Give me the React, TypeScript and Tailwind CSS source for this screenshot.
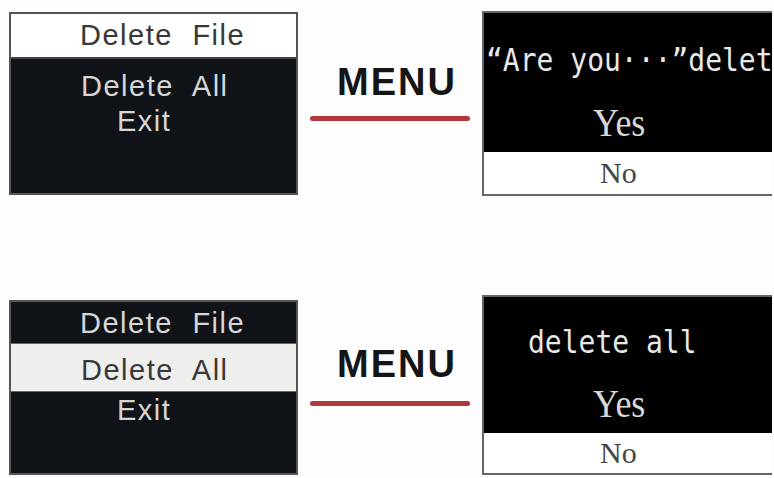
import React from "react";

const sans = { fontFamily: '"Liberation Sans", Arial, sans-serif' };
const serif = { fontFamily: '"Liberation Serif", "Times New Roman", serif' };
const mono = { fontFamily: '"DejaVu Sans Mono", "Liberation Mono", monospace' };

function MenuLabel({ top, gap }: { top: "a" | "b"; gap: "a" | "b" }) {
  return (
    <div className="ml-[12px] w-[160px] flex flex-col">
      <div
        className={
          (top === "a" ? "mt-[63px]" : "mt-[65px]") +
          " pl-[27px] text-[38px] leading-[38px] font-bold text-[#151515] tracking-[2px]"
        }
        style={sans}
      >
        MENU
      </div>
      <div
        className={
          (gap === "a" ? "mt-[15px]" : "mt-[18px]") +
          " h-[5px] w-[160px] bg-[#b3363a] rounded-full"
        }
      />
    </div>
  );
}

export default function App() {
  return (
    <div className="w-[774px] h-[478px] bg-[#fdfdfd] overflow-hidden flex flex-col" style={sans}>
      {/* Row 1 */}
      <div className="h-[280px] flex items-start">
        {/* Left menu box */}
        <div className="ml-[9px] mt-[12px] w-[289px] h-[183px] border-2 border-[#555] bg-[#101317] flex flex-col text-[29px] tracking-[1.5px] [word-spacing:10px]">
          <div className="h-[45px] bg-white border-b-2 border-[#444] text-[#383838] pl-[69px] flex items-center">
            Delete File
          </div>
          <div className="mt-[10px] h-[35px] text-[#d6d6d6] pl-[70px] flex items-center">
            Delete All
          </div>
          <div className="h-[35px] text-[#d6d6d6] pl-[106px] flex items-center">Exit</div>
        </div>

        <MenuLabel top="a" gap="a" />

        {/* Right dialog box */}
        <div className="ml-[12px] mt-[11px] w-[290px] h-[185px] border-2 border-[#666] border-r-0 bg-white overflow-hidden flex flex-col">
          <div className="h-[139px] bg-black flex flex-col">
            <div
              className="mt-[30px] h-[40px] leading-[40px] pl-[2px] text-[28px] text-[#e8e8e8] whitespace-nowrap origin-bottom scale-y-[1.12]"
              style={mono}
            >
              “Are you···”delete
            </div>
            <div
              className="mt-[20px] h-[40px] leading-[40px] pl-[109px] text-[36px] text-[#d8d8d8] origin-center scale-y-[1.12]"
              style={serif}
            >
              Yes
            </div>
          </div>
          <div
            className="h-[42px] leading-[42px] pl-[116px] text-[30px] text-[#444]"
            style={serif}
          >
            No
          </div>
        </div>
      </div>

      {/* Row 2 */}
      <div className="h-[198px] flex items-start">
        <div className="ml-[9px] mt-[20px] w-[289px] h-[175px] border-2 border-[#555] bg-[#101317] flex flex-col text-[29px] tracking-[1.5px] [word-spacing:10px]">
          <div className="h-[41px] pt-[3px] text-[#d6d6d6] pl-[69px] flex items-center">
            Delete File
          </div>
          <div className="h-[49px] pt-[7px] bg-[#eeeeec] border-y border-[#666] text-[#383838] pl-[70px] flex items-center">
            Delete All
          </div>
          <div className="h-[36px] pt-[2px] text-[#d6d6d6] pl-[106px] flex items-center">Exit</div>
        </div>

        <MenuLabel top="b" gap="b" />

        <div className="ml-[12px] mt-[15px] w-[290px] h-[180px] border-2 border-[#666] border-r-0 bg-white overflow-hidden flex flex-col">
          <div className="h-[136px] bg-black flex flex-col">
            <div
              className="mt-[28px] h-[40px] leading-[40px] pl-[44px] text-[28px] text-[#e8e8e8] whitespace-nowrap origin-bottom scale-y-[1.12]"
              style={mono}
            >
              delete all
            </div>
            <div
              className="mt-[19px] h-[40px] leading-[40px] pl-[109px] text-[36px] text-[#d8d8d8] origin-center scale-y-[1.12]"
              style={serif}
            >
              Yes
            </div>
          </div>
          <div
            className="h-[40px] leading-[40px] pl-[116px] text-[30px] text-[#444]"
            style={serif}
          >
            No
          </div>
        </div>
      </div>
    </div>
  );
}
